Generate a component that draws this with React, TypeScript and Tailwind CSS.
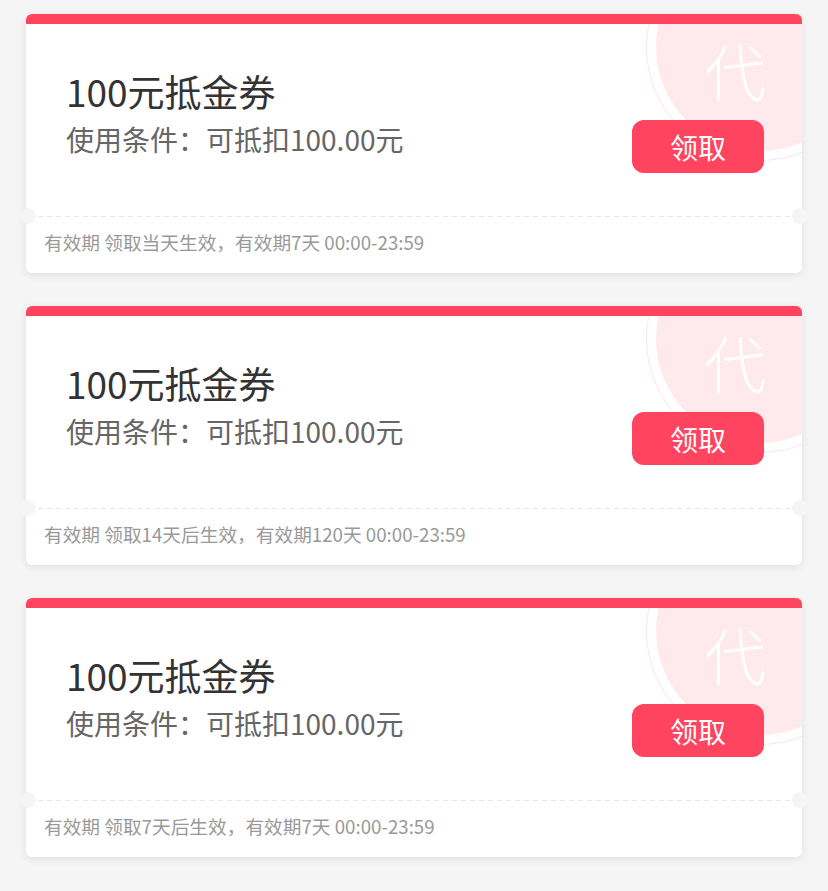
import React from "react";

const coupons = [
  { id: 1, validity: "有效期 领取当天生效，有效期7天 00:00-23:59" },
  { id: 2, validity: "有效期 领取14天后生效，有效期120天 00:00-23:59" },
  { id: 3, validity: "有效期 领取7天后生效，有效期7天 00:00-23:59" },
];

function Coupon({ validity }: { validity: string }) {
  return (
    <div className="relative h-[259px] rounded-[6px] bg-white shadow-[0_2px_8px_rgba(0,0,0,0.09)]">
      <div className="overflow-hidden rounded-t-[6px]">
        <div className="h-[10px] bg-[#ff4460]" />
        <div className="relative flex h-[192px] items-start justify-between overflow-hidden">
          <div className="pointer-events-none absolute left-[620px] top-[-91px] h-[228px] w-[228px] rounded-full border-[1.5px] border-[#fde4e7]" />
          <div className="pointer-events-none absolute left-[630px] top-[-81px] h-[208px] w-[208px] rounded-full bg-[#fee9ec]" />
          <div className="pointer-events-none absolute left-[669px] top-[6px] flex h-[80px] w-[80px] items-center justify-center text-[62px] font-light leading-none text-white">
            代
          </div>
          <div className="relative pl-[40px] pt-[43px]">
            <div className="text-[37px] leading-[48px] text-[#333333]">100元抵金券</div>
            <div className="mt-[6px] text-[28px] leading-[36px] text-[#666666]">使用条件：可抵扣100.00元</div>
          </div>
          <button className="relative mr-[38px] mt-[96px] flex h-[53px] w-[132px] items-center justify-center rounded-[12px] bg-[#ff4460] text-[28px] leading-none text-white">
            领取
          </button>
        </div>
      </div>
      <div className="mx-[12px] h-px bg-[linear-gradient(to_right,#e6e6e6_60%,transparent_0)] bg-[length:9px_1px] bg-repeat-x" />
      <div className="flex h-[56px] items-center pb-[5px] pl-[18px] text-[18.7px] text-[#999999]">{validity}</div>
      <div className="absolute left-[-6px] top-[194px] h-[16px] w-[16px] rounded-full bg-[#f5f5f5]" />
      <div className="absolute right-[-6px] top-[194px] h-[16px] w-[16px] rounded-full bg-[#f5f5f5]" />
    </div>
  );
}

export default function App() {
  return (
    <div
      className="min-h-screen bg-[#f5f5f5] px-[26px] py-[14px]"
      style={{ fontFamily: '"Noto Sans CJK SC", "Noto Sans", sans-serif' }}
    >
      <div className="flex flex-col gap-[33px]">
        {coupons.map((c) => (
          <Coupon key={c.id} validity={c.validity} />
        ))}
      </div>
    </div>
  );
}
